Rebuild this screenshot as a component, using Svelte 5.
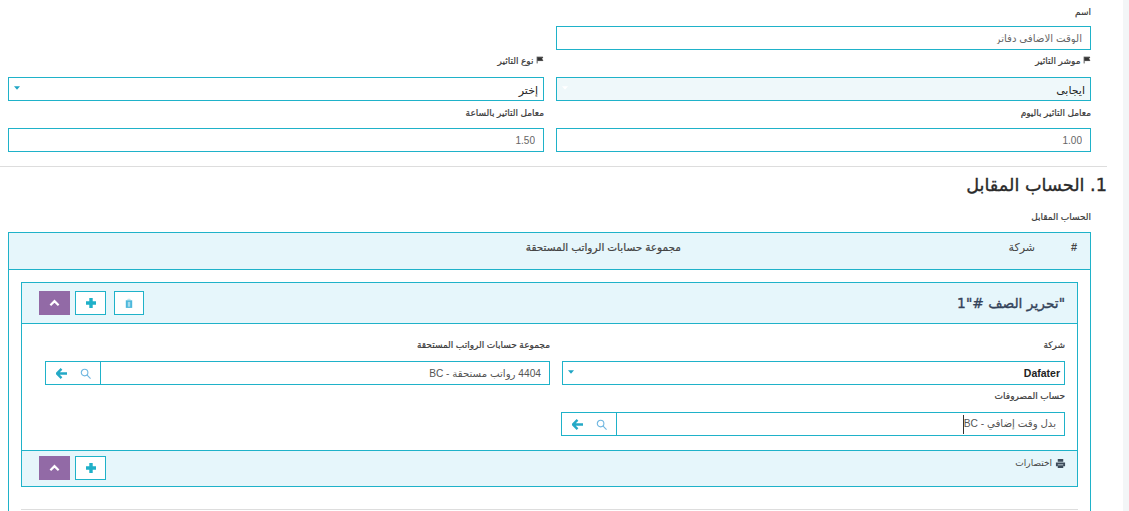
<script>
    const flag = "M2 1v12M3 2h9l-2 3 2 3H3z";

    let fields = [
        { label: "موشر التاثير", value: "ايجابى", disabled: true },
        { label: "نوع التاثير", value: "إختر", disabled: false }
    ];
    let factors = [
        { label: "معامل التاثير باليوم", value: "1.00" },
        { label: "معامل التاثير بالساعة", value: "1.50" }
    ];
</script>

{#snippet caret(light)}
    <svg class="caret" class:light viewBox="0 0 7 4" width="6" height="4"><path d="M0 0h7L3.5 4z" /></svg>
{/snippet}

{#snippet plus()}
    <svg viewBox="0 0 12 12" width="12" height="12"><path d="M6 1v10M1 6h10" fill="none" stroke="#1fb0c8" stroke-width="3.4" /></svg>
{/snippet}

{#snippet up()}
    <svg viewBox="0 0 12 8" width="11" height="8"><path d="M1.5 6.5 6 2l4.500 4.500" fill="none" stroke="#fff" stroke-width="2.400" /></svg>
{/snippet}

{#snippet lookup()}
    <div class="addon">
        <svg viewBox="0 0 12 12" width="11" height="11"><circle cx="5" cy="5" r="3.600" fill="none" stroke="#6fb6e0" stroke-width="1.200" /><path d="M7.800 7.800 11.500 11.500" stroke="#6fb6e0" stroke-width="1.200" /></svg>
        <svg viewBox="0 0 12 12" width="11" height="11"><path d="M6 1 1 6l5 5M1.500 6H12" fill="none" stroke="#25a9c6" stroke-width="2.600" /></svg>
    </div>
{/snippet}

<div class="page" dir="rtl">
    <main>
        <div class="form">
            <label class="name-label" for="name">اسم</label>
            <div class="half"><input id="name" class="box name" value="الوقت الاضافي دفاتر" readonly /></div>

            <div class="row selects">
                {#each fields as f}
                    <div>
                        <div class="lbl flagged">
                            <svg viewBox="0 0 14 14" width="8" height="8"><path d={flag} fill="#333" stroke="#333" stroke-width="1.400" /></svg>
                            {f.label}
                        </div>
                        <div class="box select" class:disabled={f.disabled}>
                            <span>{f.value}</span>
                            {@render caret(f.disabled)}
                        </div>
                    </div>
                {/each}
            </div>

            <div class="row factors">
                {#each factors as f}
                    <div>
                        <div class="lbl">{f.label}</div>
                        <input class="box" value={f.value} readonly />
                    </div>
                {/each}
            </div>
        </div>

        <hr />
        <h2>1. الحساب المقابل</h2>
        <div class="form">
            <div class="lbl table-label">الحساب المقابل</div>
            <section class="table">
                <div class="thead">
                    <span class="c-num">#</span>
                    <span class="c-co">شركة</span>
                    <span class="c-group">مجموعة حسابات الرواتب المستحقة</span>
                </div>
                <div class="tbody">
                    <div class="card">
                        <div class="card-head">
                            <h3>"تحرير الصف #"1</h3>
                            <div class="tools">
                                <button class="tool trash" aria-label="حذف">
                                    <svg viewBox="0 0 10 12" width="8" height="11"><path d="M3.500 1.500V.700h3v.8" fill="none" stroke="#9fdbe8" stroke-width="1" /><rect x="1" y="2" width="8" height="9.500" fill="#4db8dc" /><rect x="3.500" y="4" width="3" height="6" fill="#a8dcec" /></svg>
                                </button>
                                <button class="tool" aria-label="إضافة">{@render plus()}</button>
                                <button class="tool purple" aria-label="طي">{@render up()}</button>
                            </div>
                        </div>
                        <div class="card-body">
                            <div class="grid">
                                <div>
                                    <div class="lbl">شركة</div>
                                    <div class="box select dark">
                                        <span class="latin">Dafater</span>
                                        {@render caret(false)}
                                    </div>
                                </div>
                                <div>
                                    <div class="lbl">مجموعة حسابات الرواتب المستحقة</div>
                                    <div class="box group">
                                        <span class="val">4404 رواتب مستحقة - BC</span>
                                        {@render lookup()}
                                    </div>
                                </div>
                                <div class="wide">
                                    <div class="lbl">حساب المصروفات</div>
                                    <div class="box group">
                                        <span class="val">بدل وقت إضافي - BC<i class="cursor"></i></span>
                                        {@render lookup()}
                                    </div>
                                </div>
                            </div>
                        </div>
                        <div class="card-foot">
                            <div class="shortcuts">
                                <svg viewBox="0 0 12 12" width="11" height="11"><path d="M3 1h6v3H3zM1 5h10v4H9V7H3v2H1zM3 8h6v3H3z" fill="#3c4b5a" /></svg>
                                اختصارات
                            </div>
                            <div class="tools">
                                <button class="tool" aria-label="إضافة">{@render plus()}</button>
                                <button class="tool purple" aria-label="طي">{@render up()}</button>
                            </div>
                        </div>
                    </div>
                    <div class="rule"></div>
                </div>
            </section>
        </div>
    </main>
    <aside></aside>
</div>

<style>
    :global(body) {
        margin: 0;
        background: #fff;
    }

    .page {
        display: flex;
        height: 511px;
        overflow: hidden;
        font-family: "Liberation Sans", "DejaVu Sans", sans-serif;
        color: #333;
    }

    /* scrollbar gutter on the far right */
    aside {
        order: -1;
        width: 6px;
        flex: none;
        margin-left: 16px;
        background: #f3f6f7;
    }

    main {
        flex: 1;
        min-width: 0;
    }

    .form {
        padding: 0 16px 0 8px;
    }

    .box {
        display: flex;
        align-items: center;
        box-sizing: border-box;
        width: 100%;
        height: 24px;
        margin: 0;
        border: 1px solid #1fb2c9;
        border-radius: 0;
        background: #fff;
        outline: none;
        font: 10px "Liberation Sans", "DejaVu Sans", sans-serif;
        color: #666;
    }

    input.box {
        padding: 0 8px;
    }

    input.name {
        font-size: 10.2px;
    }

    .lbl,
    .name-label {
        display: block;
        font-size: 9px;
        line-height: 12px;
        color: #3a3a3a;
        -webkit-text-stroke: 0.2px #3a3a3a;
    }

    .name-label {
        padding-top: 6px;
        height: 26px;
        box-sizing: border-box;
    }

    .half {
        width: 535px;
    }

    .row {
        display: grid;
        grid-template-columns: 535px 536px;
        column-gap: 12px;
    }

    .selects {
        padding-top: 5px;
    }

    .selects .lbl {
        height: 22px;
    }

    .factors {
        padding-top: 6px;
    }

    .factors .lbl {
        height: 21px;
    }

    .select {
        justify-content: space-between;
        padding: 3px 5px 0;
        font-size: 11px;
        color: #222;
    }

    .select.disabled {
        background: #eff8fa;
    }

    .caret {
        margin-bottom: 5px;
        fill: #1fa5c4;
    }

    .caret.light {
        fill: #fff;
    }

    hr {
        margin: 14px 0 0;
        border: none;
        border-top: 1px solid #ddd;
    }

    h2 {
        margin: 0;
        padding-top: 9px;
        height: 41px;
        box-sizing: border-box;
        font: 400 17.700px/18px "DejaVu Sans", sans-serif;
        color: #2a2a2a;
        -webkit-text-stroke: 0.35px #2a2a2a;
    }

    .table-label {
        height: 24px;
        padding-top: 3px;
        box-sizing: border-box;
    }

    .table {
        border: 1px solid #1fb2c9;
        border-bottom: none;
        height: 400px;
    }

    .thead {
        display: flex;
        height: 37px;
        padding: 7px 13px 0 0;
        box-sizing: border-box;
        border-bottom: 1px solid #1fb2c9;
        background: #e6f6fb;
        font-size: 11px;
        line-height: 14px;
        color: #444;
    }

    .c-num {
        width: 42px;
        font-weight: 700;
    }

    .c-co {
        width: 354px;
    }

    .c-group {
        font-size: 10.5px;
        -webkit-text-stroke: 0.2px #444;
    }

    .tbody {
        padding: 12px 12px 0;
    }

    .card {
        border: 1px solid #1fb2c9;
    }

    .card-head,
    .card-foot {
        display: flex;
        justify-content: space-between;
        background: #e6f6fb;
    }

    .card-head {
        height: 41px;
        align-items: center;
        padding: 0 12px 0 7px;
        border-bottom: 1px solid #1fb2c9;
        box-sizing: border-box;
    }

    h3 {
        margin: 0;
        font: 400 13.800px/16px "DejaVu Sans", sans-serif;
        color: #34435a;
        -webkit-text-stroke: 0.35px #34435a;
    }

    .tools {
        display: flex;
        flex-direction: row;
        gap: 5px;
        padding-left: 10px;
    }

    .tool {
        display: flex;
        align-items: center;
        justify-content: center;
        width: 31px;
        height: 24px;
        padding: 0;
        border: 1px solid #1fb2c9;
        background: #fff;
        box-sizing: border-box;
    }

    .trash {
        width: 30px;
        margin-left: 3px;
    }

    .purple {
        border: none;
        background: #926aa6;
    }

    .card-body {
        height: 126px;
        padding: 12px 12px 0 23px;
        box-sizing: border-box;
    }

    .grid {
        display: grid;
        grid-template-columns: 503px 505px;
        column-gap: 12px;
        row-gap: 2px;
    }

    .grid .lbl {
        height: 25px;
        padding-top: 3px;
        box-sizing: border-box;
    }

    .wide {
        margin-left: -1px;
    }

    .dark {
        color: #222;
        padding-right: 4px;
    }

    .latin {
        font-size: 10.500px;
        font-weight: 700;
        margin-bottom: 3px;
    }

    .group {
        justify-content: space-between;
    }

    .val {
        padding-right: 8px;
        font-size: 10.200px;
        color: #555;
    }

    .cursor {
        display: inline-block;
        width: 1px;
        height: 19px;
        margin-left: -1px;
        vertical-align: middle;
        background: #333;
    }

    .addon {
        display: flex;
        align-items: center;
        justify-content: space-between;
        width: 55px;
        height: 100%;
        padding: 0 9px 0 10px;
        box-sizing: border-box;
        border-right: 1px solid #1fb2c9;
    }

    .card-foot {
        height: 36px;
        padding: 5px 11px 0 7px;
        box-sizing: border-box;
        border-top: 1px solid #1fb2c9;
    }

    .shortcuts {
        display: flex;
        align-items: center;
        gap: 3px;
        height: 14px;
        font-size: 9px;
        color: #444;
    }

    .rule {
        margin-top: 22px;
        border-top: 1px solid #ddd;
    }
</style>
